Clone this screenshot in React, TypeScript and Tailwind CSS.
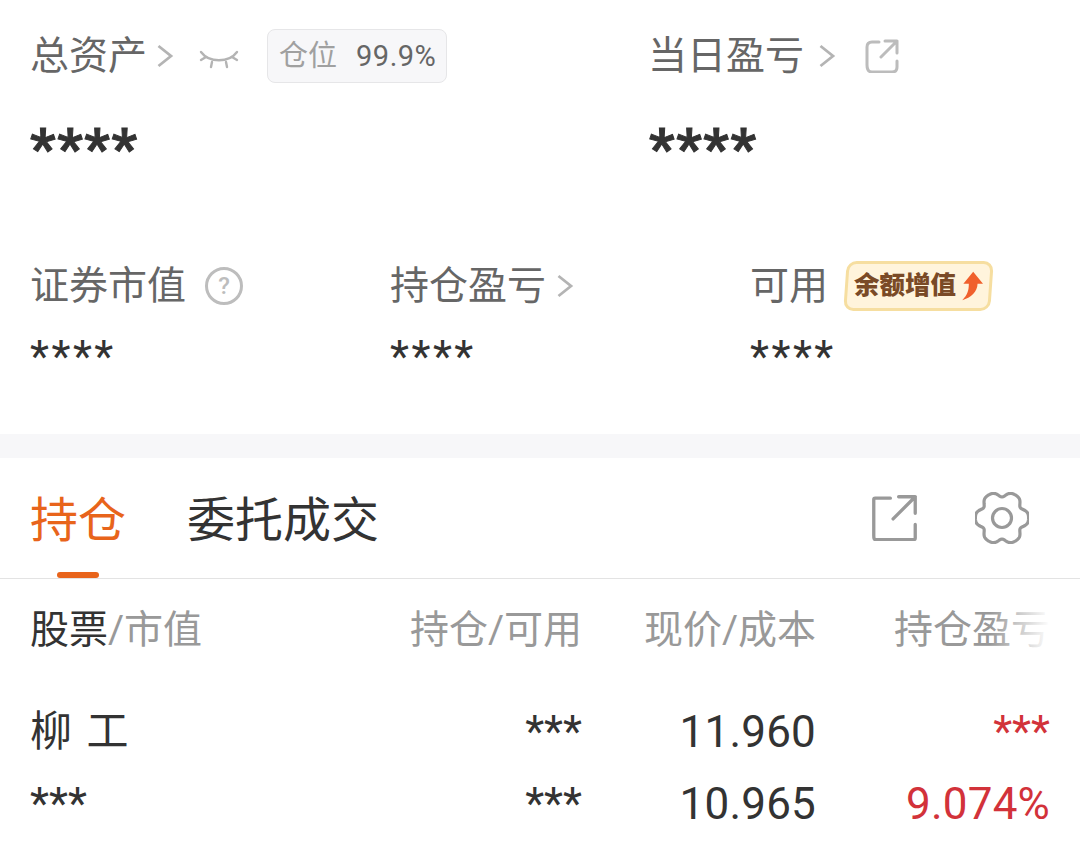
const cjk = "font-['Roboto','Noto_Sans_CJK_SC',sans-serif]";

function Chevron() {
  return (
    <svg width="18" height="26" viewBox="0 0 18 26" fill="none" stroke="#b4b4b4" strokeWidth="2.8">
      <path d="M2.5 3 L15 13 L2.5 23" />
    </svg>
  );
}

function ClosedEye() {
  return (
    <svg width="40" height="20" viewBox="0 0 40 20" fill="none" stroke="#b4b4b4" strokeWidth="2.4" strokeLinecap="round">
      <path d="M2 2 C10 13 30 13 38 2" />
      <path d="M2 10 L7 7 M38 10 L33 7" />
      <path d="M13 12 L12 17 M27 12 L28 17" />
    </svg>
  );
}

function ShareIcon({ size, color, width, rounded }: { size: number; color: string; width: number; rounded: number }) {
  return (
    <svg width={size} height={size} viewBox="0 0 34 34" fill="none" stroke={color} strokeWidth={width} strokeLinecap="round" strokeLinejoin="round">
      <path d={`M14 3 H${rounded + 2} Q2 3 2 ${rounded + 3} V${31 - rounded} Q2 33 ${rounded + 2} 33 H${32 - rounded} Q32 33 32 ${33 - rounded} V22`} />
      <path d="M16 18 L32 2 M20 2 H32 V14" />
    </svg>
  );
}

// six lobes, drawn from a polar curve
const gearPath =
  Array.from({ length: 120 }, (_, i) => {
    const a = (i / 120) * Math.PI * 2;
    const r = 24.5 + 2.8 * Math.cos(6 * a) - 0.7 * Math.cos(12 * a);
    return `${i === 0 ? "M" : "L"}${(27 + r * Math.cos(a)).toFixed(2)} ${(26 + r * Math.sin(a)).toFixed(2)}`;
  }).join(" ") + " Z";

function Gear() {
  return (
    <svg width="54" height="52" viewBox="0 0 54 52" fill="none" stroke="#999999" strokeWidth="3.2" strokeLinejoin="round">
      <path d={gearPath} />
      <circle cx="27" cy="26" r="9.5" />
    </svg>
  );
}

function HelpIcon() {
  return (
    <div className="flex h-[38px] w-[38px] items-center justify-center rounded-full border-[3px] border-[#bdbdbd] text-[24px] leading-none font-medium text-[#bdbdbd]">
      ?
    </div>
  );
}

function BalanceBadge() {
  return (
    <div className="flex h-[50px] w-[147px] -skew-x-[4deg] items-center rounded-[10px] border-[3px] border-[#f6dea0] bg-[#fff4dc] pl-[6px]">
      <span className="skew-x-[4deg] text-[25.5px] leading-none font-black whitespace-nowrap text-[#7a4a26]">余额增值</span>
      <svg className="ml-[3px] skew-x-[4deg]" width="24" height="32" viewBox="0 0 22 28">
        <path d="M13 1 L22 12 L17 12 C17 19 11 25 3 27 C8 22 9 18 9 12 L4 12 Z" fill="#f0602c" />
      </svg>
    </div>
  );
}

function Stat({ label, children }: { label: string; children?: React.ReactNode }) {
  return (
    <div>
      <div className="flex h-[50px] items-center text-[39px] leading-none text-[#666666]">
        {label}
        {children}
      </div>
      <div className="mt-[21px] h-[50px] text-[44px] leading-[50px] tracking-[2.5px] text-[#333333]">****</div>
    </div>
  );
}

function StockRow() {
  return (
    <div className="grid grid-cols-[352px_200px_234px_234px] pt-[39px] text-[#333333]">
      <div>
        <div className="h-[72px] text-[42px] leading-[72px] tracking-[2px] whitespace-pre">柳 工</div>
        <div className="h-[72px] text-[44px] leading-[72px]">***</div>
      </div>
      <div className="text-right text-[44px]">
        <div className="h-[72px] leading-[72px]">***</div>
        <div className="h-[72px] leading-[72px]">***</div>
      </div>
      <div className="text-right text-[44px] tracking-[0.2px]">
        <div className="h-[72px] leading-[72px]">11.960</div>
        <div className="h-[72px] leading-[72px]">10.965</div>
      </div>
      <div className="text-right text-[44px] text-[#d2323a]">
        <div className="h-[72px] leading-[72px]">***</div>
        <div className="h-[72px] leading-[72px] tracking-[0.2px]">9.074%</div>
      </div>
    </div>
  );
}

const bigStars = "mt-[37px] h-[60px] text-[56px] leading-[60px] font-bold tracking-[1.7px] text-[#333333] [-webkit-text-stroke:1px_#333333]";

export default function App() {
  return (
    <div className={`${cjk} h-[845px] w-[1080px] overflow-hidden bg-white`}>
      <div className="h-[434px] pl-[30px]">
        <div className="flex pt-[30px]">
          <div className="w-[618px]">
            <div className="flex h-[52px] items-center">
              <span className="text-[39px] leading-none text-[#666666]">总资产</span>
              <span className="ml-[9px]"><Chevron /></span>
              <span className="ml-[25px] mt-[8px]"><ClosedEye /></span>
              <div className="ml-[28px] flex h-[54px] w-[180px] items-center rounded-[8px] border border-[#e6e6e8] bg-[#f7f7f9] pl-[11px] text-[29px] leading-none">
                <span className="text-[#a0a0a0]">仓位</span>
                <span className="ml-[19px] tracking-[0.5px] text-[#666666]">99.9%</span>
              </div>
            </div>
            <div className={bigStars}>****</div>
          </div>
          <div>
            <div className="flex h-[52px] items-center">
              <span className="text-[39px] leading-none text-[#666666]">当日盈亏</span>
              <span className="ml-[14px]"><Chevron /></span>
              <span className="ml-[29px]"><ShareIcon size={34} color="#bcbcbc" width={3} rounded={5} /></span>
            </div>
            <div className={`${bigStars} ml-[1px]`}>****</div>
          </div>
        </div>
        <div className="mt-[82px] grid grid-cols-[360px_360px_1fr]">
          <Stat label="证券市值">
            <span className="ml-[19px]"><HelpIcon /></span>
          </Stat>
          <Stat label="持仓盈亏">
            <span className="ml-[10px]"><Chevron /></span>
          </Stat>
          <Stat label="可用">
            <span className="ml-[17px]"><BalanceBadge /></span>
          </Stat>
        </div>
      </div>
      <div className="h-[24px] bg-[#f7f7f9]" />
      <div className="relative flex h-[121px] border-b border-[#e3e3e3] pl-[30px]">
        <div className="relative w-[157px] pt-[33px] text-[48px] leading-[60px] text-[#e8641b]">
          持仓
          <div className="absolute bottom-0 left-[27px] h-[6px] w-[42px] rounded-full bg-[#e8641b]" />
        </div>
        <div className="pt-[33px] text-[48px] leading-[60px] text-[#333333]">委托成交</div>
        <div className="ml-auto mr-[51px] flex items-start gap-[57px] pt-[34px]">
          <span className="mt-[2px]"><ShareIcon size={47} color="#999999" width={2.4} rounded={1} /></span>
          <Gear />
        </div>
      </div>
      <div className="relative grid grid-cols-[352px_200px_234px_234px] pt-[24px] pl-[30px] text-[39px] leading-[54px] text-[#999999]">
        <div><span className="text-[#333333]">股票</span>/市值</div>
        <div className="text-right">持仓/可用</div>
        <div className="text-right">现价/成本</div>
        <div className="text-right whitespace-nowrap">持仓盈亏</div>
        <div className="absolute top-[24px] right-[30px] h-[54px] w-[60px] bg-gradient-to-r from-white/0 to-white" />
      </div>
      <div className="pl-[30px]"><StockRow /></div>
    </div>
  );
}
